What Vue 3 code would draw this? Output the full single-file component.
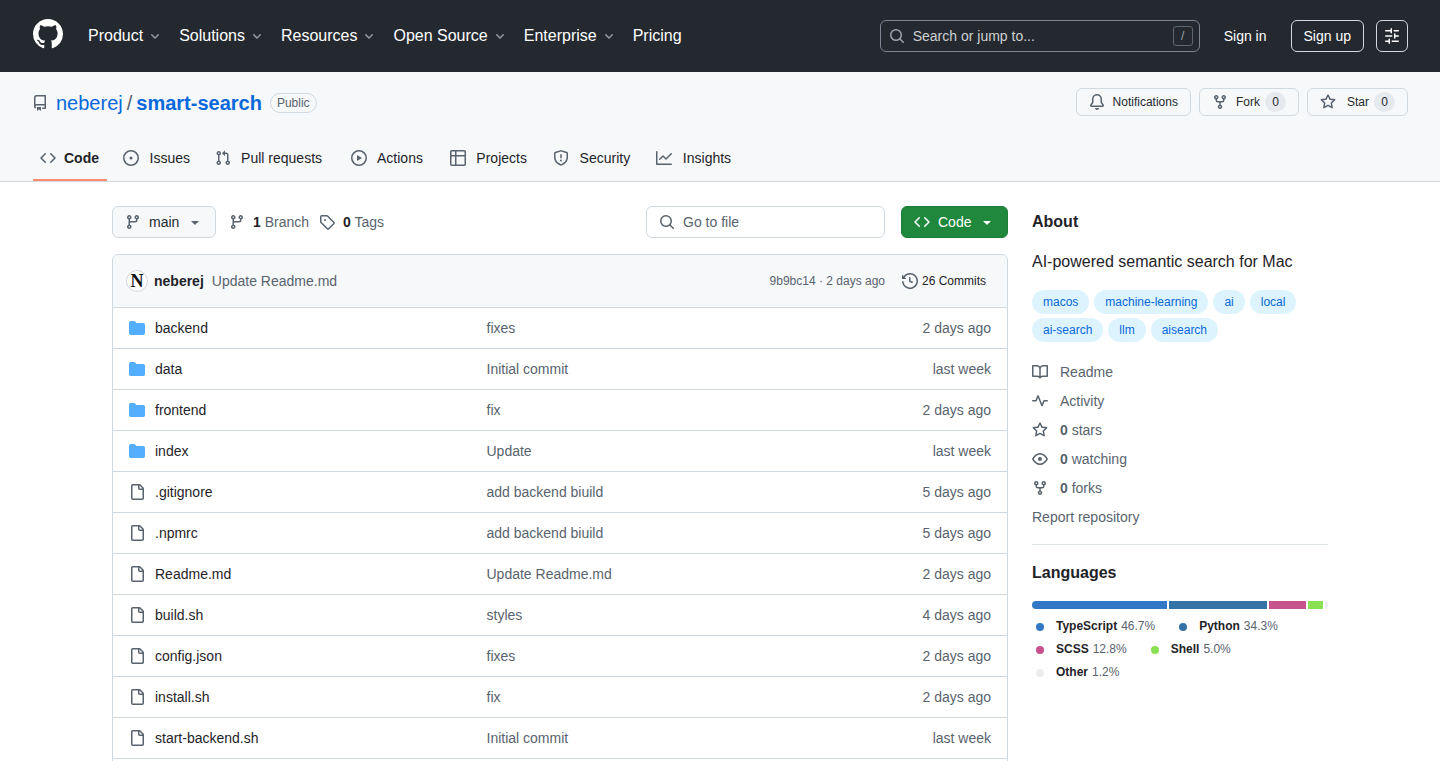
<script setup>
const icons = {
  github: 'M8 0c4.42 0 8 3.58 8 8a8.013 8.013 0 0 1-5.45 7.59c-.4.08-.55-.17-.55-.38 0-.27.01-1.13.01-2.2 0-.75-.25-1.23-.54-1.48 1.78-.2 3.65-.88 3.65-3.95 0-.88-.31-1.59-.82-2.15.08-.2.36-1.02-.08-2.12 0 0-.67-.22-2.2.82-.64-.18-1.32-.27-2-.27-.68 0-1.36.09-2 .27-1.53-1.03-2.2-.82-2.2-.82-.44 1.1-.16 1.92-.08 2.12-.51.56-.82 1.28-.82 2.15 0 3.06 1.86 3.75 3.64 3.95-.23.2-.44.55-.51 1.07-.46.21-1.61.55-2.33-.66-.15-.24-.6-.83-1.23-.82-.67.01-.27.38.01.53.34.19.73.9.82 1.13.16.45.68 1.31 2.69.94 0 .67.01 1.3.01 1.49 0 .21-.15.45-.55.38A7.995 7.995 0 0 1 0 8c0-4.42 3.58-8 8-8Z',
  chevron: 'M6 8.825c-.2 0-.4-.1-.5-.2l-3.3-3.3c-.3-.3-.3-.8 0-1.1.3-.3.8-.3 1.1 0l2.7 2.7 2.7-2.7c.3-.3.8-.3 1.1 0 .3.3.3.8 0 1.1l-3.2 3.2c-.2.2-.4.3-.6.3Z',
  caret: 'm4.427 7.427 3.396 3.396a.25.25 0 0 0 .354 0l3.396-3.396A.25.25 0 0 0 11.396 7H4.604a.25.25 0 0 0-.177.427Z',
  search: 'M10.68 11.74a6 6 0 0 1-7.922-8.982 6 6 0 0 1 8.982 7.922l3.04 3.04a.749.749 0 0 1-.326 1.275.749.749 0 0 1-.734-.215ZM11.5 7a4.499 4.499 0 1 0-8.997 0A4.499 4.499 0 0 0 11.5 7Z',
  sliders: 'M15 2.75a.75.75 0 0 1-.75.75h-4a.75.75 0 0 1 0-1.5h4a.75.75 0 0 1 .75.75Zm-8.5.75v1.25a.75.75 0 0 0 1.5 0v-4a.75.75 0 0 0-1.5 0V2H1.75a.75.75 0 0 0 0 1.5H6.5Zm1.25 5.25a.75.75 0 0 0 0-1.5h-6a.75.75 0 0 0 0 1.5h6ZM15 8a.75.75 0 0 1-.75.75H11.5V10a.75.75 0 1 1-1.5 0V6a.75.75 0 0 1 1.5 0v1.25h2.75A.75.75 0 0 1 15 8Zm-9 5.25v-2a.75.75 0 0 0-1.5 0v1.25H1.75a.75.75 0 0 0 0 1.5H4.5v1.25a.75.75 0 0 0 1.5 0v-2Zm9 0a.75.75 0 0 1-.75.75h-6a.75.75 0 0 1 0-1.5h6a.75.75 0 0 1 .75.75Z',
  repo: 'M2 2.5A2.5 2.5 0 0 1 4.5 0h8.75a.75.75 0 0 1 .75.75v12.5a.75.75 0 0 1-.75.75h-2.5a.75.75 0 0 1 0-1.5h1.75v-2h-8a1 1 0 0 0-.714 1.7.75.75 0 1 1-1.072 1.05A2.495 2.495 0 0 1 2 11.5Zm10.5-1h-8a1 1 0 0 0-1 1v6.708A2.486 2.486 0 0 1 4.5 9h8ZM5 12.25a.25.25 0 0 1 .25-.25h3.5a.25.25 0 0 1 .25.25v3.25a.25.25 0 0 1-.4.2l-1.45-1.087a.249.249 0 0 0-.3 0L5.4 15.7a.25.25 0 0 1-.4-.2Z',
  bell: 'M8 16a2 2 0 0 0 1.985-1.75c.017-.137-.097-.25-.235-.25h-3.5c-.138 0-.252.113-.235.25A2 2 0 0 0 8 16ZM3 5a5 5 0 0 1 10 0v2.947c0 .05.015.098.042.139l1.703 2.555A1.519 1.519 0 0 1 13.482 13H2.518a1.516 1.516 0 0 1-1.263-2.36l1.703-2.554A.255.255 0 0 0 3 7.947Zm5-3.5A3.5 3.5 0 0 0 4.5 5v2.947c0 .346-.102.683-.294.97l-1.703 2.556a.017.017 0 0 0-.003.01l.001.006c0 .002.002.004.004.006l.006.004.007.001h10.964l.007-.001.006-.004.004-.006.001-.007a.017.017 0 0 0-.003-.01l-1.703-2.554a1.745 1.745 0 0 1-.294-.97V5A3.5 3.5 0 0 0 8 1.5Z',
  fork: 'M5 5.372v.878c0 .414.336.75.75.75h4.5a.75.75 0 0 0 .75-.75v-.878a2.25 2.25 0 1 1 1.5 0v.878a2.25 2.25 0 0 1-2.25 2.25h-1.5v2.128a2.251 2.251 0 1 1-1.5 0V8.5h-1.5A2.25 2.25 0 0 1 3.5 6.25v-.878a2.25 2.25 0 1 1 1.5 0ZM5 3.25a.75.75 0 1 0-1.5 0 .75.75 0 0 0 1.5 0Zm6.75.75a.75.75 0 1 0 0-1.5.75.75 0 0 0 0 1.5Zm-3 8.75a.75.75 0 1 0-1.5 0 .75.75 0 0 0 1.5 0Z',
  star: 'M8 .25a.75.75 0 0 1 .673.418l1.882 3.815 4.21.612a.75.75 0 0 1 .416 1.279l-3.046 2.97.719 4.192a.751.751 0 0 1-1.088.791L8 12.347l-3.766 1.98a.75.75 0 0 1-1.088-.79l.72-4.194L.818 6.374a.75.75 0 0 1 .416-1.28l4.21-.611L7.327.668A.75.75 0 0 1 8 .25Zm0 2.445L6.615 5.5a.75.75 0 0 1-.564.41l-3.097.45 2.24 2.184a.75.75 0 0 1 .216.664l-.528 3.084 2.769-1.456a.75.75 0 0 1 .698 0l2.77 1.456-.53-3.084a.75.75 0 0 1 .216-.664l2.24-2.183-3.096-.45a.75.75 0 0 1-.564-.41L8 2.694Z',
  code: 'm11.28 3.22 4.25 4.25a.75.75 0 0 1 0 1.06l-4.25 4.25a.749.749 0 0 1-1.275-.326.749.749 0 0 1 .215-.734L13.94 8l-3.72-3.72a.749.749 0 0 1 .326-1.275.749.749 0 0 1 .734.215Zm-6.56 0a.751.751 0 0 1 1.042.018.751.751 0 0 1 .018 1.042L2.06 8l3.72 3.72a.749.749 0 0 1-.326 1.275.749.749 0 0 1-.734-.215L.47 8.53a.75.75 0 0 1 0-1.06Z',
  issue: 'M8 9.5a1.5 1.5 0 1 0 0-3 1.5 1.5 0 0 0 0 3ZM8 0a8 8 0 1 1 0 16A8 8 0 0 1 8 0ZM1.5 8a6.5 6.5 0 1 0 13 0 6.5 6.5 0 0 0-13 0Z',
  pull: 'M1.5 3.25a2.25 2.25 0 1 1 3 2.122v5.256a2.251 2.251 0 1 1-1.5 0V5.372A2.25 2.25 0 0 1 1.5 3.25Zm5.677-.177L9.573.677A.25.25 0 0 1 10 .854V2.5h1A2.5 2.5 0 0 1 13.5 5v5.628a2.251 2.251 0 1 1-1.5 0V5a1 1 0 0 0-1-1h-1v1.646a.25.25 0 0 1-.427.177L7.177 3.427a.25.25 0 0 1 0-.354ZM3.75 2.5a.75.75 0 1 0 0 1.5.75.75 0 0 0 0-1.5Zm0 9.5a.75.75 0 1 0 0 1.5.75.75 0 0 0 0-1.5Zm8.25.75a.75.75 0 1 0 1.5 0 .75.75 0 0 0-1.5 0Z',
  play: 'M8 0a8 8 0 1 1 0 16A8 8 0 0 1 8 0ZM1.5 8a6.5 6.5 0 1 0 13 0 6.5 6.5 0 0 0-13 0Zm4.879-2.773 4.264 2.559a.25.25 0 0 1 0 .428l-4.264 2.559A.25.25 0 0 1 6 10.559V5.442a.25.25 0 0 1 .379-.215Z',
  table: 'M0 1.75C0 .784.784 0 1.75 0h12.5C15.216 0 16 .784 16 1.75v12.5A1.75 1.75 0 0 1 14.25 16H1.75A1.75 1.75 0 0 1 0 14.25ZM6.5 6.5v8h7.75a.25.25 0 0 0 .25-.25V6.5Zm8-1.5V1.75a.25.25 0 0 0-.25-.25H6.5V5Zm-13 1.5v7.75c0 .138.112.25.25.25H5v-8ZM5 5V1.5H1.75a.25.25 0 0 0-.25.25V5Z',
  shield: 'M7.467.133a1.748 1.748 0 0 1 1.066 0l5.25 1.68A1.75 1.75 0 0 1 15 3.48V7c0 1.566-.32 3.182-1.303 4.682-.983 1.498-2.585 2.813-5.032 3.855a1.697 1.697 0 0 1-1.33 0c-2.447-1.042-4.049-2.357-5.032-3.855C1.32 10.182 1 8.566 1 7V3.48a1.75 1.75 0 0 1 1.217-1.667Zm.61 1.429a.25.25 0 0 0-.153 0l-5.25 1.68a.25.25 0 0 0-.174.238V7c0 1.358.275 2.666 1.057 3.86.784 1.194 2.121 2.34 4.366 3.297a.196.196 0 0 0 .154 0c2.245-.956 3.582-2.104 4.366-3.298C13.225 9.666 13.5 8.36 13.5 7V3.48a.251.251 0 0 0-.174-.237l-5.25-1.68ZM8.75 4.75v3a.75.75 0 0 1-1.5 0v-3a.75.75 0 0 1 1.5 0ZM9 10.5a1 1 0 1 1-2 0 1 1 0 0 1 2 0Z',
  graph: 'M1.5 1.75V13.5h13.75a.75.75 0 0 1 0 1.5H.75a.75.75 0 0 1-.75-.75V1.75a.75.75 0 0 1 1.5 0Zm14.28 2.53-5.25 5.25a.75.75 0 0 1-1.06 0L7 7.06 4.28 9.78a.751.751 0 0 1-1.042-.018.751.751 0 0 1-.018-1.042l3.25-3.25a.75.75 0 0 1 1.06 0L10 7.94l4.72-4.72a.751.751 0 0 1 1.042.018.751.751 0 0 1 .018 1.042Z',
  branch: 'M9.5 3.25a2.25 2.25 0 1 1 3 2.122V6A2.5 2.5 0 0 1 10 8.5H6a1 1 0 0 0-1 1v1.128a2.251 2.251 0 1 1-1.5 0V5.372a2.25 2.25 0 1 1 1.5 0v1.836A2.493 2.493 0 0 1 6 7h4a1 1 0 0 0 1-1v-.628A2.25 2.25 0 0 1 9.5 3.25Zm-6 0a.75.75 0 1 0 1.5 0 .75.75 0 0 0-1.5 0Zm8.25-.75a.75.75 0 1 0 0 1.5.75.75 0 0 0 0-1.5ZM4.25 12a.75.75 0 1 0 0 1.5.75.75 0 0 0 0-1.5Z',
  tag: 'M1 7.775V2.75C1 1.784 1.784 1 2.75 1h5.025c.464 0 .91.184 1.238.513l6.25 6.25a1.75 1.75 0 0 1 0 2.474l-5.026 5.026a1.75 1.75 0 0 1-2.474 0l-6.25-6.25A1.752 1.752 0 0 1 1 7.775Zm1.5 0c0 .066.026.13.073.177l6.25 6.25a.25.25 0 0 0 .354 0l5.025-5.025a.25.25 0 0 0 0-.354l-6.25-6.25a.25.25 0 0 0-.177-.073H2.75a.25.25 0 0 0-.25.25ZM6 5a1 1 0 1 1 0 2 1 1 0 0 1 0-2Z',
  history: 'm.427 1.927 1.215 1.215a8.002 8.002 0 1 1-1.6 5.685.75.75 0 1 1 1.493-.154 6.5 6.5 0 1 0 1.18-4.458l1.358 1.358A.25.25 0 0 1 3.896 6H.25A.25.25 0 0 1 0 5.75V2.104a.25.25 0 0 1 .427-.177ZM7.75 4a.75.75 0 0 1 .75.75v2.992l2.028.812a.75.75 0 0 1-.557 1.392l-2.5-1A.751.751 0 0 1 7 8.25v-3.5A.75.75 0 0 1 7.75 4Z',
  folder: 'M1.75 1A1.75 1.75 0 0 0 0 2.75v10.5C0 14.216.784 15 1.75 15h12.5A1.75 1.75 0 0 0 16 13.25v-8.5A1.75 1.75 0 0 0 14.25 3H7.5a.25.25 0 0 1-.2-.1l-.9-1.2C6.07 1.26 5.55 1 5 1H1.75Z',
  file: 'M2 1.75C2 .784 2.784 0 3.75 0h6.586c.464 0 .909.184 1.237.513l2.914 2.914c.329.328.513.773.513 1.237v9.586A1.75 1.75 0 0 1 13.25 16h-9.5A1.75 1.75 0 0 1 2 14.25Zm1.75-.25a.25.25 0 0 0-.25.25v12.5c0 .138.112.25.25.25h9.5a.25.25 0 0 0 .25-.25V6h-2.75A1.75 1.75 0 0 1 9 4.25V1.5Zm6.75.062V4.25c0 .138.112.25.25.25h2.688l-.011-.013-2.914-2.914-.013-.011Z',
  book: 'M0 1.75A.75.75 0 0 1 .75 1h4.253c1.227 0 2.317.59 3 1.501A3.743 3.743 0 0 1 11.006 1h4.245a.75.75 0 0 1 .75.75v10.5a.75.75 0 0 1-.75.75h-4.507a2.25 2.25 0 0 0-1.591.659l-.622.621a.75.75 0 0 1-1.06 0l-.622-.621A2.25 2.25 0 0 0 5.258 13H.75a.75.75 0 0 1-.75-.75Zm7.251 10.324.004-5.073-.002-2.253A2.25 2.25 0 0 0 5.003 2.5H1.5v9h3.757a3.75 3.75 0 0 1 1.994.574ZM8.755 4.75l-.004 7.322a3.752 3.752 0 0 1 1.992-.572H14.5v-9h-3.495a2.25 2.25 0 0 0-2.25 2.25Z',
  pulse: 'M6 2c.306 0 .582.187.696.471L10 10.731l1.304-3.26A.751.751 0 0 1 12 7h3.25a.75.75 0 0 1 0 1.5h-2.742l-1.812 4.528a.751.751 0 0 1-1.392 0L6 4.77 4.696 8.03A.75.75 0 0 1 4 8.5H.75a.75.75 0 0 1 0-1.5h2.742l1.812-4.529A.751.751 0 0 1 6 2Z',
  eye: 'M8 2c1.981 0 3.671.992 4.933 2.078 1.27 1.091 2.187 2.345 2.637 3.023a1.62 1.62 0 0 1 0 1.798c-.45.678-1.367 1.932-2.637 3.023C11.67 13.008 9.981 14 8 14c-1.981 0-3.671-.992-4.933-2.078C1.797 10.83.88 9.576.43 8.898a1.62 1.62 0 0 1 0-1.798c.45-.677 1.367-1.931 2.637-3.022C4.33 2.992 6.019 2 8 2ZM1.679 7.932a.12.12 0 0 0 0 .136c.411.622 1.241 1.75 2.366 2.717C5.176 11.758 6.527 12.5 8 12.5c1.473 0 2.825-.742 3.955-1.715 1.124-.967 1.954-2.096 2.366-2.717a.12.12 0 0 0 0-.136c-.412-.621-1.242-1.75-2.366-2.717C10.824 4.242 9.473 3.5 8 3.5c-1.473 0-2.825.742-3.955 1.715-1.124.967-1.954 2.096-2.366 2.717ZM8 10a2 2 0 1 1-.001-3.999A2 2 0 0 1 8 10Z',
};

const navItems = [
  { label: 'Product', menu: true },
  { label: 'Solutions', menu: true },
  { label: 'Resources', menu: true },
  { label: 'Open Source', menu: true },
  { label: 'Enterprise', menu: true },
  { label: 'Pricing', menu: false },
];

const tabs = [
  { label: 'Code', icon: 'code', active: true },
  { label: 'Issues', icon: 'issue' },
  { label: 'Pull requests', icon: 'pull' },
  { label: 'Actions', icon: 'play' },
  { label: 'Projects', icon: 'table' },
  { label: 'Security', icon: 'shield' },
  { label: 'Insights', icon: 'graph' },
];

const files = [
  { name: 'backend', type: 'folder', msg: 'fixes', date: '2 days ago' },
  { name: 'data', type: 'folder', msg: 'Initial commit', date: 'last week' },
  { name: 'frontend', type: 'folder', msg: 'fix', date: '2 days ago' },
  { name: 'index', type: 'folder', msg: 'Update', date: 'last week' },
  { name: '.gitignore', type: 'file', msg: 'add backend biuild', date: '5 days ago' },
  { name: '.npmrc', type: 'file', msg: 'add backend biuild', date: '5 days ago' },
  { name: 'Readme.md', type: 'file', msg: 'Update Readme.md', date: '2 days ago' },
  { name: 'build.sh', type: 'file', msg: 'styles', date: '4 days ago' },
  { name: 'config.json', type: 'file', msg: 'fixes', date: '2 days ago' },
  { name: 'install.sh', type: 'file', msg: 'fix', date: '2 days ago' },
  { name: 'start-backend.sh', type: 'file', msg: 'Initial commit', date: 'last week' },
];

const topics = ['macos', 'machine-learning', 'ai', 'local', 'ai-search', 'llm', 'aisearch'];

const stats = [
  { icon: 'book', text: 'Readme' },
  { icon: 'pulse', text: 'Activity' },
  { icon: 'star', count: '0', text: 'stars' },
  { icon: 'eye', count: '0', text: 'watching' },
  { icon: 'fork', count: '0', text: 'forks' },
];

const languages = [
  { name: 'TypeScript', pct: 46.7, color: '#3178c6' },
  { name: 'Python', pct: 34.3, color: '#3572a5' },
  { name: 'SCSS', pct: 12.8, color: '#c6538c' },
  { name: 'Shell', pct: 5.0, color: '#89e051' },
  { name: 'Other', pct: 1.2, color: '#ededed' },
];
</script>

<template>
  <div class="page">
    <header class="topbar">
      <svg class="logo" viewBox="0 0 16 16" width="30" height="30"><path :d="icons.github" /></svg>
      <nav class="topnav">
        <a v-for="item in navItems" :key="item.label" class="topnav-item">
          {{ item.label }}
          <svg v-if="item.menu" class="topnav-chevron" viewBox="0 0 12 12" width="12" height="12"><path :d="icons.chevron" /></svg>
        </a>
      </nav>
      <div class="topsearch">
        <svg viewBox="0 0 16 16" width="16" height="16"><path :d="icons.search" /></svg>
        <span class="topsearch-text">Search or jump to...</span>
        <span class="slash-key">/</span>
      </div>
      <a class="signin">Sign in</a>
      <a class="signup">Sign up</a>
      <a class="sliders-btn">
        <svg viewBox="0 0 16 16" width="16" height="16"><path :d="icons.sliders" /></svg>
      </a>
    </header>

    <section class="repohead">
      <div class="repohead-top">
        <div class="repo-title">
          <svg class="icon" viewBox="0 0 16 16" width="16" height="16"><path :d="icons.repo" /></svg>
          <a class="owner">neberej</a>
          <span class="sep">/</span>
          <a class="reponame">smart-search</a>
          <span class="public">Public</span>
        </div>
        <div class="repo-actions">
          <a class="small-btn">
            <svg class="icon" viewBox="0 0 16 16" width="16" height="16"><path :d="icons.bell" /></svg>
            Notifications
          </a>
          <a class="small-btn fork-btn">
            <svg class="icon" viewBox="0 0 16 16" width="16" height="16"><path :d="icons.fork" /></svg>
            Fork
            <span class="counter">0</span>
          </a>
          <a class="small-btn star-btn">
            <svg class="icon" viewBox="0 0 16 16" width="16" height="16"><path :d="icons.star" /></svg>
            Star
            <span class="counter">0</span>
          </a>
        </div>
      </div>
      <nav class="tabs">
        <a v-for="tab in tabs" :key="tab.label" class="tab" :class="{ active: tab.active }">
          <svg class="icon" viewBox="0 0 16 16" width="16" height="16"><path :d="icons[tab.icon]" /></svg>
          <span class="tab-label" :data-content="tab.label">{{ tab.label }}</span>
        </a>
      </nav>
    </section>

    <main class="content">
      <div class="left">
        <div class="filebar">
          <button class="branch-btn">
            <svg class="icon" viewBox="0 0 16 16" width="16" height="16"><path :d="icons.branch" /></svg>
            <span class="branch-name">main</span>
            <svg class="icon" viewBox="0 0 16 16" width="16" height="16"><path :d="icons.caret" /></svg>
          </button>
          <a class="meta-link branches">
            <svg class="icon" viewBox="0 0 16 16" width="16" height="16"><path :d="icons.branch" /></svg>
            <span><strong>1</strong> Branch</span>
          </a>
          <a class="meta-link tags">
            <svg class="icon" viewBox="0 0 16 16" width="16" height="16"><path :d="icons.tag" /></svg>
            <span><strong>0</strong> Tags</span>
          </a>
          <div class="goto">
            <svg class="icon" viewBox="0 0 16 16" width="16" height="16"><path :d="icons.search" /></svg>
            <span>Go to file</span>
          </div>
          <button class="code-btn">
            <svg viewBox="0 0 16 16" width="16" height="16"><path :d="icons.code" /></svg>
            <span>Code</span>
            <svg viewBox="0 0 16 16" width="16" height="16"><path :d="icons.caret" /></svg>
          </button>
        </div>

        <div class="filebox">
          <div class="commit-row">
            <span class="avatar">N</span>
            <strong class="author">neberej</strong>
            <span class="commit-msg">Update Readme.md</span>
            <span class="commit-meta">9b9bc14 · 2 days ago</span>
            <a class="commits">
              <svg class="icon" viewBox="0 0 16 16" width="16" height="16"><path :d="icons.history" /></svg>
              26 Commits
            </a>
          </div>
          <div v-for="file in files" :key="file.name" class="file-row">
            <svg class="file-icon" :class="file.type" viewBox="0 0 16 16" width="16" height="16"><path :d="icons[file.type]" /></svg>
            <span class="file-name">{{ file.name }}</span>
            <span class="file-msg">{{ file.msg }}</span>
            <span class="file-date">{{ file.date }}</span>
          </div>
          <div class="file-row"></div>
        </div>
      </div>

      <aside class="side">
        <h2 class="side-title">About</h2>
        <p class="desc">AI-powered semantic search for Mac</p>
        <div class="topics">
          <a v-for="t in topics" :key="t" class="topic">{{ t }}</a>
        </div>
        <ul class="stats">
          <li v-for="s in stats" :key="s.icon">
            <svg class="icon" viewBox="0 0 16 16" width="16" height="16"><path :d="icons[s.icon]" /></svg>
            <span v-if="s.count"><strong>{{ s.count }}</strong> {{ s.text }}</span>
            <span v-else>{{ s.text }}</span>
          </li>
          <li>Report repository</li>
        </ul>
        <div class="divider"></div>
        <h2 class="side-title">Languages</h2>
        <div class="langbar">
          <span
            v-for="l in languages"
            :key="l.name"
            class="langbar-seg"
            :style="{ width: l.pct + '%', background: l.color }"
          ></span>
        </div>
        <ul class="langs">
          <li v-for="l in languages" :key="l.name">
            <span class="dot" :style="{ background: l.color }"></span>
            <strong>{{ l.name }}</strong>
            <span class="pct">{{ l.pct.toFixed(1) }}%</span>
          </li>
        </ul>
      </aside>
    </main>
  </div>
</template>

<style scoped>
.page{
  height: 761px;
  overflow: hidden;
  font-family: "Liberation Sans", Arial, sans-serif;
  font-size: 14px;
  color: #1f2328;
  background: #fff;
}
svg{
  fill: currentColor;
  flex: none;
  display: block;
}
.icon{
  color: #59636e;
}
a{
  text-decoration: none;
}

/* top bar */
.topbar{
  display: flex;
  align-items: center;
  height: 72px;
  box-sizing: border-box;
  padding: 0 32px;
  background: #24292f;
  color: #fff;
}
.logo{
  margin: 0 25px 4px 1px;
}
.topnav{
  display: flex;
  flex: 1;
  gap: 18px;
}
.topnav-item{
  display: flex;
  align-items: center;
  gap: 6px;
  font-size: 16px;
  color: #fff;
}
.topnav-chevron{
  color: #8f969d;
}
.topsearch{
  display: flex;
  align-items: center;
  box-sizing: border-box;
  width: 320px;
  height: 32px;
  padding: 0 6px 0 8px;
  border: 1px solid #7d8590;
  border-radius: 6px;
  color: #9ea5ad;
}
.topsearch-text{
  flex: 1;
  margin-left: 8px;
  color: #cdd0d3;
}
.slash-key{
  display: flex;
  align-items: center;
  justify-content: center;
  box-sizing: border-box;
  width: 20px;
  height: 20px;
  border: 1px solid #5f666d;
  border-radius: 3px;
  font-size: 12px;
  color: #9ea5ad;
}
.signin{
  margin-left: 24px;
  color: #fff;
}
.signup{
  display: flex;
  align-items: center;
  height: 32px;
  box-sizing: border-box;
  margin-left: 24px;
  padding: 0 12px;
  border: 1px solid #d0d7de;
  border-radius: 6px;
  color: #fff;
}
.sliders-btn{
  display: flex;
  align-items: center;
  justify-content: center;
  box-sizing: border-box;
  width: 32px;
  height: 32px;
  margin-left: 12px;
  border: 1px solid #d0d7de;
  border-radius: 6px;
  color: #fff;
}

/* repo head */
.repohead{
  box-sizing: border-box;
  height: 110px;
  padding: 16px 32px 0;
  background: #f6f8fa;
  border-bottom: 1px solid #d1d9e0;
}
.repohead-top{
  display: flex;
  justify-content: space-between;
  align-items: flex-start;
  height: 48px;
}
.repo-title{
  display: flex;
  align-items: center;
  height: 30px;
}
.owner{
  margin-left: 8px;
  font-size: 20px;
  color: #0969da;
}
.sep{
  margin: 0 4px;
  font-size: 20px;
  color: #59636e;
}
.reponame{
  font-size: 20px;
  font-weight: 700;
  color: #0969da;
}
.public{
  margin-left: 8px;
  padding: 0 6px;
  height: 20px;
  line-height: 18px;
  box-sizing: border-box;
  border: 1px solid #d1d9e0;
  border-radius: 2em;
  font-size: 12px;
  color: #59636e;
}
.repo-actions{
  display: flex;
  gap: 8px;
}
.small-btn{
  display: flex;
  align-items: center;
  gap: 8px;
  box-sizing: border-box;
  height: 28px;
  padding: 0 12px;
  background: #f6f8fa;
  border: 1px solid #d1d9e0;
  border-radius: 6px;
  font-size: 12px;
  color: #25292e;
}
.counter{
  width: 21px;
  height: 20px;
  line-height: 20px;
  text-align: center;
  border-radius: 2em;
  background: #e6eaef;
}
.fork-btn .counter{
  margin-left: -3px;
}
.star-btn .icon{
  margin-right: 3px;
}
.star-btn .counter{
  margin-left: -3px;
}
.tabs{
  display: flex;
  gap: 8px;
  margin-left: 1px;
}
.tab{
  display: flex;
  align-items: center;
  gap: 10.5px;
  height: 45px;
  box-sizing: border-box;
  padding: 0 5.5px 2px 8px;
  color: #1f2328;
  position: relative;
}
.tab.active{
  gap: 8px;
  padding: 0 8px 2px 7px;
  font-weight: 700;
}
.tab-label::before{
  content: attr(data-content);
  display: block;
  height: 0;
  visibility: hidden;
  font-weight: 700;
}
.tab.active::after{
  content: "";
  position: absolute;
  left: 0;
  right: 0;
  bottom: 0;
  height: 2px;
  background: #fd8c73;
}

/* main */
.content{
  display: flex;
  gap: 24px;
  width: 1216px;
  margin: 0 auto;
  padding-top: 24px;
}
.left{
  width: 896px;
  flex: none;
}
.filebar{
  display: flex;
  align-items: center;
  height: 32px;
}
.branch-btn{
  display: flex;
  align-items: center;
  box-sizing: border-box;
  width: 104px;
  height: 32px;
  padding: 0 12px;
  background: #f6f8fa;
  border: 1px solid #d1d9e0;
  border-radius: 6px;
  font: inherit;
  color: #25292e;
}
.branch-name{
  margin: 0 auto 0 8px;
}
.meta-link{
  display: flex;
  align-items: center;
  gap: 8px;
  color: #59636e;
}
.meta-link strong{
  color: #1f2328;
}
.branches{
  margin-left: 13px;
}
.tags{
  margin-left: 10px;
}
.goto{
  display: flex;
  align-items: center;
  gap: 8px;
  box-sizing: border-box;
  width: 239px;
  height: 32px;
  margin-left: auto;
  padding: 0 12px;
  border: 1px solid #d1d9e0;
  border-radius: 6px;
  color: #59636e;
}
.code-btn{
  display: flex;
  align-items: center;
  gap: 8px;
  box-sizing: border-box;
  width: 107px;
  height: 32px;
  margin-left: 16px;
  padding: 0 12px;
  background: #1f883d;
  border: 1px solid #1c7d38;
  border-radius: 6px;
  font: inherit;
  color: #fff;
}
.code-btn span{
  flex: 1;
  text-align: left;
}
.filebox{
  margin-top: 16px;
  border: 1px solid #d1d9e0;
  border-radius: 6px 6px 0 0;
}
.commit-row{
  display: flex;
  align-items: center;
  box-sizing: border-box;
  height: 52px;
  padding: 0 21px 0 13px;
  background: #f6f8fa;
  border-radius: 6px 6px 0 0;
}
.avatar{
  display: flex;
  align-items: center;
  justify-content: center;
  box-sizing: border-box;
  width: 22px;
  height: 22px;
  border: 1px solid #d1d9e0;
  border-radius: 50%;
  background: #fff;
  font-family: "Liberation Serif", serif;
  font-weight: 700;
  font-size: 18px;
  color: #111;
}
.author{
  margin-left: 6px;
}
.commit-msg{
  margin-left: 8px;
  color: #59636e;
}
.commit-meta{
  margin-left: auto;
  font-size: 12px;
  color: #59636e;
}
.commits{
  display: flex;
  align-items: center;
  gap: 4px;
  margin-left: 17px;
  font-size: 12px;
  color: #1f2328;
}
.file-row{
  display: flex;
  align-items: center;
  box-sizing: border-box;
  height: 41px;
  padding: 0 16px;
  border-top: 1px solid #d1d9e0;
}
.file-icon{
  margin-right: 10px;
}
.file-icon.folder{
  color: #54aeff;
}
.file-icon.file{
  color: #59636e;
}
.file-name{
  width: 331.5px;
  flex: none;
}
.file-msg{
  flex: 1;
  color: #59636e;
}
.file-date{
  color: #59636e;
}

/* sidebar */
.side{
  width: 296px;
  flex: none;
  padding-top: 4px;
}
.side-title{
  margin: 0;
  font-size: 16px;
  line-height: 24px;
  font-weight: 700;
  color: #1f2328;
}
.desc{
  margin: 16px 0 0;
  font-size: 16px;
  line-height: 24px;
  color: #1f2328;
}
.topics{
  display: flex;
  flex-wrap: wrap;
  gap: 4px 5px;
  margin-top: 16px;
}
.topic{
  height: 24px;
  line-height: 24px;
  padding: 0 11px;
  border-radius: 2em;
  background: #ddf4ff;
  font-size: 12px;
  color: #0969da;
}
.stats{
  list-style: none;
  margin: 15px 0 0;
  padding: 0;
  color: #59636e;
}
.stats li{
  display: flex;
  align-items: center;
  gap: 12px;
  height: 29px;
}
.stats strong{
  color: #59636e;
}
.divider{
  height: 1px;
  margin: 13px 0 16px;
  background: #d1d9e0b3;
}
.langbar{
  display: flex;
  height: 8px;
  margin-top: 16px;
  border-radius: 6px;
  overflow: hidden;
}
.langbar-seg{
  margin-right: 2px;
}
.langbar-seg:last-child{
  margin-right: 0;
}
.langs{
  display: flex;
  flex-wrap: wrap;
  column-gap: 20px;
  list-style: none;
  margin: 6px 0 0;
  padding: 0;
  font-size: 12px;
  line-height: 23px;
}
.langs li{
  display: flex;
  align-items: center;
}
.dot{
  width: 8px;
  height: 8px;
  margin: 0 12px 0 4px;
  border-radius: 50%;
}
.pct{
  margin-left: 4px;
  color: #59636e;
}
</style>

<style>
html, body{
  margin: 0;
  overflow: hidden;
}
</style>
